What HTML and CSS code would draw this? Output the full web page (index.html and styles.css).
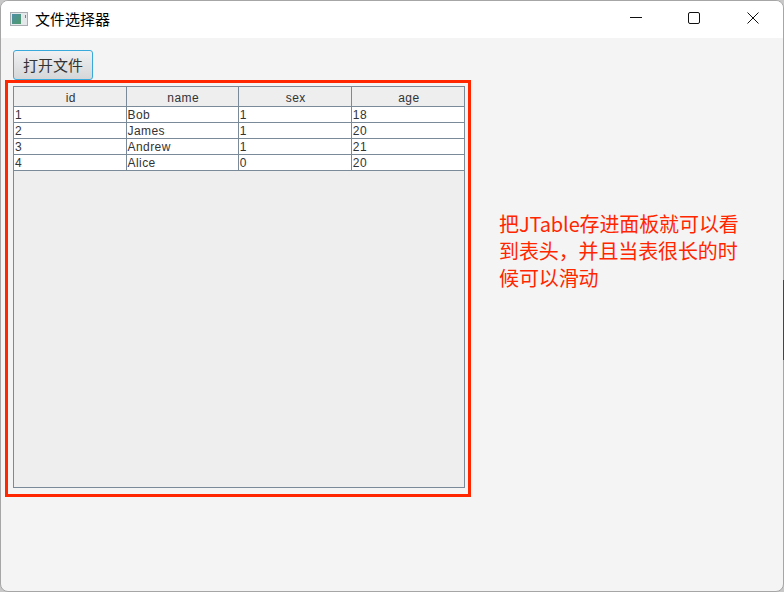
FILE: index.html
```html
<!DOCTYPE html>
<html lang="zh">
<head>
<meta charset="utf-8">
<title>文件选择器</title>
<link rel="stylesheet" href="styles.css">
</head>
<body>
<div class="window">
  <header class="titlebar">
    <svg class="app-icon" width="18" height="14" viewBox="0 0 18 14">
      <rect x="0.5" y="0.5" width="17" height="13" fill="#e4e8ea" stroke="#a9aeb2"/>
      <defs><linearGradient id="g" x1="0" y1="0" x2="1" y2="1"><stop offset="0" stop-color="#4f8fa8"/><stop offset="1" stop-color="#4f9a68"/></linearGradient></defs>
      <rect x="2" y="2" width="9" height="10" fill="url(#g)"/>
      <rect x="15" y="3" width="1" height="3" fill="#4f8fa8"/>
    </svg>
    <span class="title">文件选择器</span>
    <div class="controls">
      <button class="ctl"><svg width="12" height="12" viewBox="0 0 12 12"><path d="M0 5.5H12" stroke="#111" fill="none"/></svg></button>
      <button class="ctl"><svg width="12" height="12" viewBox="0 0 12 12"><rect x="0.5" y="0.5" width="11" height="11" rx="1.5" stroke="#111" fill="none"/></svg></button>
      <button class="ctl ctl-close"><svg width="12" height="12" viewBox="0 0 12 12"><path d="M0.5 0.5L11.5 11.5M11.5 0.5L0.5 11.5" stroke="#111" fill="none"/></svg></button>
    </div>
  </header>
  <main class="content">
    <button class="open-btn">打开文件</button>
    <div class="scroll-pane">
      <table class="grid">
        <thead><tr><th>id</th><th>name</th><th>sex</th><th>age</th></tr></thead>
        <tbody>
          <tr><td>1</td><td>Bob</td><td>1</td><td>18</td></tr>
          <tr><td>2</td><td>James</td><td>1</td><td>20</td></tr>
          <tr><td>3</td><td>Andrew</td><td>1</td><td>21</td></tr>
          <tr><td>4</td><td>Alice</td><td>0</td><td>20</td></tr>
        </tbody>
      </table>
    </div>
  </main>
  <div class="annot-box"></div>
  <p class="annot-text">把JTable存进面板就可以看到表头，并且当表很长的时候可以滑动</p>
</div>
<div class="desktop-edge"></div>
</body>
</html>
```
FILE: styles.css
```css
* { box-sizing: border-box; }
html, body { margin: 0; padding: 0; background: #c8c8c8; }
body { width: 784px; height: 592px; overflow: hidden; }
.window {
  position: relative;
  width: 784px;
  height: 592px;
  margin: 0;
  border: 1px solid #a6a6a6;
  border-radius: 8px;
  overflow: hidden;
  background: #f4f4f4;
  display: flex;
  flex-direction: column;
  font-family: "Liberation Sans", "Noto Sans CJK SC", sans-serif;
}
.desktop-edge {
  position: absolute;
  left: 783px;
  top: 280px;
  width: 1px;
  height: 80px;
  background: #444;
}
.titlebar {
  flex: none;
  height: 37px;
  background: #fff;
  display: flex;
  align-items: center;
  padding-left: 9px;
}
.app-icon { flex: none; margin-top: -2px; }
.title {
  margin-left: 7px;
  margin-top: -3px;
  font: 15px "Noto Sans CJK SC", sans-serif;
  color: #000;
}
.controls { margin-left: auto; display: flex; padding-right: 1px; }
.ctl {
  width: 58px;
  height: 37px;
  padding: 0 0 3px;
  border: 0;
  background: transparent;
  display: flex;
  align-items: center;
  justify-content: center;
}
.ctl-close { margin-left: 1px; }
.content { flex: 1; padding: 12px 0 0 12px; }
.open-btn {
  display: block;
  width: 80px;
  height: 30px;
  padding: 0 0 2px;
  border: 1px solid #39a9dc;
  border-radius: 3px;
  background: linear-gradient(#f0f1f2, #d4d6d8);
  font: 15px "Noto Sans CJK SC", sans-serif;
  color: #333;
}
.scroll-pane {
  width: 452px;
  height: 402px;
  margin-top: 6px;
  border: 1px solid #7a8a99;
  border-top: 0;
  background: #eeeeee;
}
.grid {
  width: 451px;
  table-layout: fixed;
  border-collapse: collapse;
  font: 12px "Liberation Sans", sans-serif;
  letter-spacing: 0.4px;
  color: #333;
}
.grid th:nth-child(1), .grid th:nth-child(2) { width: 112px; }
.grid th:nth-child(3), .grid th:nth-child(4) { width: 113px; }
.grid th {
  height: 20px;
  padding: 3px 0 0 2px;
  font-weight: 400;
  text-align: center;
  background: #eeeeee;
  border: 1px solid #7a8a99;
  border-left: 0;
}
.grid td {
  height: 16px;
  padding: 1px 0 0 1px;
  line-height: 14px;
  background: #fff;
  border-right: 1px solid #7a8a99;
  border-bottom: 1px solid #7a8a99;
}
.annot-box {
  position: absolute;
  left: 4px;
  top: 79px;
  width: 466px;
  height: 417px;
  border: 3px solid #ff2600;
}
.annot-text {
  position: absolute;
  left: 498px;
  top: 209px;
  width: 242px;
  margin: 0;
  font: 20px/27px "Noto Sans CJK SC", sans-serif;
  letter-spacing: -0.12px;
  color: #ff2600;
}
```
